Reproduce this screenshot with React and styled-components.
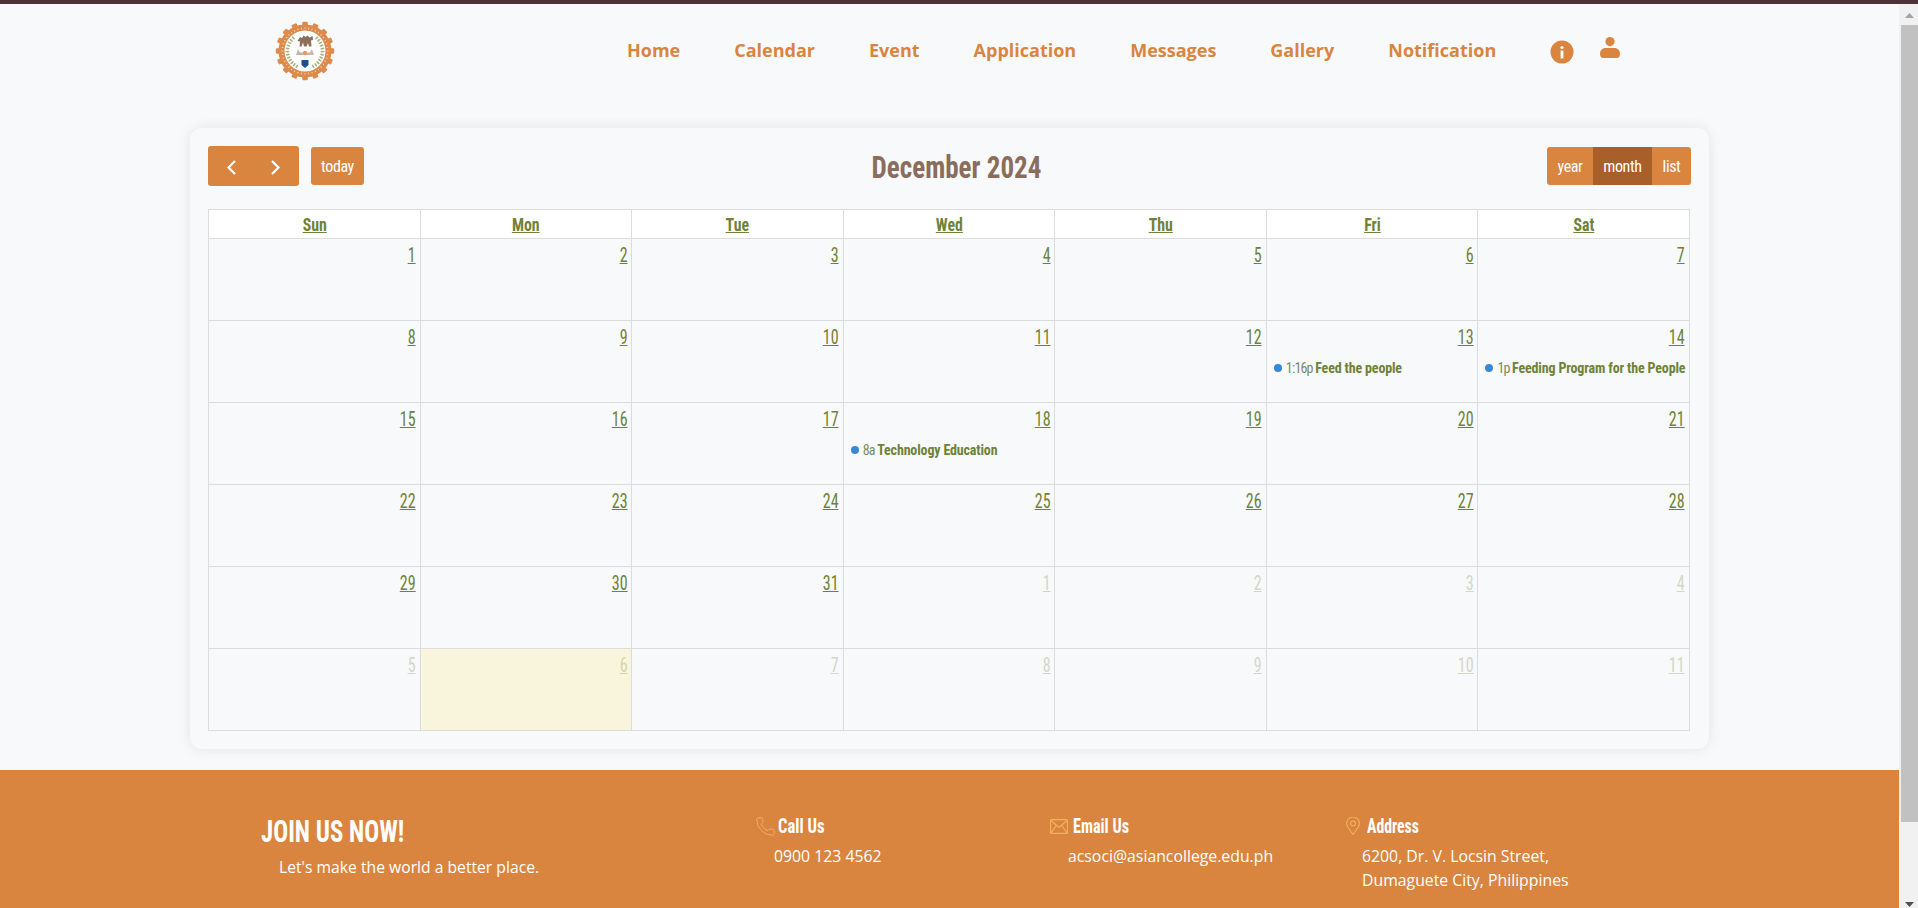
import React from "react";
import styled, { createGlobalStyle } from "styled-components";
import { Phone } from "lucide-react";

const ORANGE = "#d98540";
const OLIVE = "#6f8238";
const ACCENT = "#f4b25e";
const NARROW = `"Liberation Sans Narrow", "Roboto Condensed", "DejaVu Sans Condensed", sans-serif`;

const Global = createGlobalStyle`
  html, body { margin: 0; padding: 0; height: 100%; overflow: hidden; background: #f8f9fb; }
  #root { height: 100%; }
`;

const Shell = styled.div`
  height: 908px;
  display: flex;
  flex-direction: column;
`;
const TopLine = styled.div`
  height: 4px;
  flex: none;
  background: #4f3138;
`;
const Viewport = styled.div`
  flex: 1;
  min-height: 0;
  display: flex;
`;
const Page = styled.main`
  flex: 1;
  min-width: 0;
  overflow: hidden;
  background: #f8f9fb;
`;
const ScrollRail = styled.div`
  width: 19px;
  flex: none;
  display: flex;
  flex-direction: column;
  background: #f1f1f1;
`;
const ScrollCap = styled.div`
  height: 21px;
  flex: none;
  display: flex;
  justify-content: center;
  align-items: ${(p) => (p.$end ? "flex-end" : "flex-start")};
  padding: ${(p) => (p.$end ? "0 0 1px 2px" : "9px 0 0 2px")};
  box-sizing: border-box;
`;
const ScrollThumb = styled.div`
  height: 797px;
  margin-left: 2px;
  background: #c1c1c1;
  flex: none;
`;
const ScrollGap = styled.div`
  flex: 1;
`;
const Squeeze = styled.span`
  display: inline-block;
  transform: scaleX(${(p) => p.$x});
  transform-origin: ${(p) => p.$origin || "center"};
`;
const HeadLabel = styled(Squeeze)`
  text-decoration: underline;
  text-decoration-thickness: 1px;
`;
const Header = styled.header`
  display: flex;
  align-items: center;
  height: 92px;
  padding-left: 275px;
`;
const LogoBox = styled.div`
  width: 60px;
  height: 60px;
  margin: 1px 292px 0 0;
  svg { display: block; }
`;
const Nav = styled.nav`
  display: flex;
  align-items: center;
  gap: 54px;
  font: 700 18px "Open Sans", sans-serif;
  color: ${ORANGE};
`;
const NavLink = styled.a`
  color: inherit;
  text-decoration: none;
`;
const IconLink = styled.a`
  display: block;
  margin-top: ${(p) => p.$top}px;
  margin-left: ${(p) => p.$left}px;
  line-height: 0;
`;
const Card = styled.section`
  width: 1483px;
  margin: 32px auto 0;
  padding: 18px;
  border-radius: 12px;
  background: #f8f9fb;
  box-shadow: 0 0 14px rgba(0, 0, 0, 0.09);
`;
const Toolbar = styled.div`
  display: flex;
  justify-content: space-between;
  align-items: center;
  height: 40px;
  margin-bottom: 23px;
`;
const LeftTools = styled.div`
  display: flex;
  align-items: center;
  gap: 12px;
`;
const ArrowGroup = styled.div`
  width: 91px;
  height: 40px;
  display: flex;
  align-items: center;
  justify-content: space-between;
  padding: 2px 19px 0;
  box-sizing: border-box;
  background: ${ORANGE};
  border-radius: 3px;
`;
const ToolButton = styled.button`
  width: ${(p) => p.$w}px;
  height: 38px;
  padding: 0;
  border: 0;
  color: #fff;
  font: 400 16px ${NARROW};
  letter-spacing: -0.4px;
  background: ${(p) => (p.$active ? "#a95f2a" : ORANGE)};
  border-radius: ${(p) => p.$radius || "3px"};
`;
const Title = styled.h2`
  margin: 2px 0 0 1px;
  font: 700 32px ${NARROW};
  color: #8a6d5a;
`;
const ViewGroup = styled.div`
  display: flex;
`;
const Grid = styled.table`
  width: 1482px;
  table-layout: fixed;
  border-collapse: collapse;
  font-family: ${NARROW};
`;
const HeadCell = styled.th`
  height: 28px;
  padding: 0;
  border: 1px solid #dcdcdc;
  background: #fff;
  color: ${OLIVE};
  font-size: 18px;
  font-weight: 700;
`;
const DayCell = styled.td`
  height: 82px;
  box-sizing: border-box;
  padding: 0 4px;
  vertical-align: top;
  border: 1px solid #dcdcdc;
  background: ${(p) => (p.$today ? "#f9f5dc" : "transparent")};
`;
const DayNumber = styled.a`
  display: block;
  margin-top: 5px;
  text-align: right;
  font-size: 20px;
  line-height: 22px;
  color: ${OLIVE};
  text-decoration: underline;
  text-decoration-thickness: 1px;
  transform: scaleX(0.8);
  transform-origin: right;
  opacity: ${(p) => (p.$muted ? 0.28 : 1)};
`;
const EventRow = styled.div`
  display: flex;
  align-items: center;
  margin: 11px 0 0 3px;
  white-space: nowrap;
  font-size: 14px;
  line-height: 18px;
  color: ${OLIVE};
`;
const Dot = styled.span`
  width: 8px;
  height: 8px;
  margin-right: 4px;
  border-radius: 50%;
  background: #3788d8;
  flex: none;
`;
const EventTime = styled.span`
  margin-right: 2.500px;
  letter-spacing: -0.8px;
  color: #7d8c62;
`;
const EventTitle = styled.b`
  font-weight: 700;
  letter-spacing: -0.15px;
`;
const Footer = styled.footer`
  display: grid;
  grid-template-columns: 495px 294px 296px 1fr;
  height: 208px;
  margin-top: 21px;
  padding: 44px 0 0 261px;
  box-sizing: border-box;
  background: ${ORANGE};
  color: #fff;
`;
const JoinTitle = styled.h3`
  margin: 0;
  font: 700 31px/36px ${NARROW};
`;
const JoinText = styled.p`
  margin: 6px 0 0 18px;
  font: 400 15.7px "Open Sans", sans-serif;
`;
const InfoHead = styled.div`
  display: flex;
  align-items: center;
  gap: ${(p) => p.$gap}px;
  height: 24px;
  font: 700 21px ${NARROW};
`;
const InfoText = styled.p`
  margin: 6px 0 0 ${(p) => p.$indent}px;
  font: 400 15.8px/24px "Open Sans", sans-serif;
`;
const PhoneGlyph = styled(Phone)`
  margin: 0 -1.500px;
  flex: none;
`;

const Logo = () => {
  const teeth = Array.from({ length: 16 }, (_, i) => (i * 360) / 16);
  const marks = Array.from({ length: 40 }, (_, i) => (i * 360) / 40);
  const leaves = Array.from({ length: 12 }, (_, i) => 42 + i * 10);
  return (
    <svg width="60" height="60" viewBox="0 0 60 60">
      {teeth.map((a) => (
        <rect key={a} x="27.2" y="0.8" width="5.600" height="5" rx="1.200" fill="#dd8a4a" transform={`rotate(${a} 30 30)`} />
      ))}
      <circle cx="30" cy="30" r="26.500" fill="#dd8a4a" />
      {marks.map((a) => (
        <rect key={a} x="29.6" y="6.500" width=".8" height="1.600" fill="#f8e3cf" transform={`rotate(${a} 30 30)`} />
      ))}
      <circle cx="30" cy="30" r="20.500" fill="#fff" />
      {leaves.map((a) => (
        <g key={a}>
          <ellipse cx="30" cy="12.500" rx=".9" ry="2.100" fill="#a6b585" transform={`rotate(${a} 30 30)`} />
          <ellipse cx="30" cy="12.500" rx=".9" ry="2.100" fill="#a6b585" transform={`rotate(${-a} 30 30)`} />
        </g>
      ))}
      <path d="M22.500 20l2.500-4 2 1 1.500-2.500 2 1.500 2-1.500 2 2 3-1.500.5 4-2 .5.5 6h-2.500l-1-3.500-1.500 3.500h-2.500l-1-4-1.500 4h-2l.5-5z" fill="#8c705c" />
      <path d="M21 34l2-6 2 3.500h10l2-3.500 2 6z" fill="#c9b5a6" />
      <circle cx="30" cy="32" r="2.200" fill="#e89a5e" />
      <path d="M26.500 39h7v5l-3.500 3-3.500-3z" fill="#1d4f91" />
    </svg>
  );
};

const ScrollArrow = ({ up }) => (
  <svg width="9" height="5" viewBox="0 0 9 5" fill={up ? "#a3a3a3" : "#505050"}>
    <path d={up ? "M4.500 0L9 5H0z" : "M0 0h9L4.500 5z"} />
  </svg>
);
const Chevron = ({ left }) => (
  <svg width="9" height="15" viewBox="0 0 9 15" fill="none" stroke="#fff" strokeWidth="2.200">
    <path d={left ? "M8 1L1.500 7.500 8 14" : "M1 1l6.500 6.500L1 14"} />
  </svg>
);
const InfoIcon = () => (
  <svg width="24" height="24" viewBox="0 0 24 24">
    <circle cx="12" cy="12" r="11.500" fill={ORANGE} />
    <circle cx="12" cy="7.500" r="1.600" fill="#fff" />
    <rect x="10.600" y="10.500" width="2.800" height="8" rx=".5" fill="#fff" />
  </svg>
);
const UserIcon = () => (
  <svg width="20" height="21" viewBox="0 0 20 21" fill={ORANGE}>
    <circle cx="10" cy="4.600" r="4.600" />
    <path d="M6 11h8c3.300 0 6 2 6 5.500 0 2.500-1 4.500-3 4.500H3c-2 0-3-2-3-4.500C0 13 2.700 11 6 11z" />
  </svg>
);
const MailIcon = () => (
  <svg width="18" height="15" viewBox="0 0 18 15" fill="none" stroke={ACCENT} strokeWidth="1.100">
    <rect x=".6" y=".6" width="16.800" height="13.800" rx="1" />
    <path d="M1 1.500l8 7 8-7M1 14l5.500-8M17 14l-5.500-8" />
  </svg>
);
const PinIcon = () => (
  <svg width="14" height="18" viewBox="0 0 14 18" fill="none" stroke={ACCENT} strokeWidth="1.100">
    <path d="M7 17.400C4.500 13.500.6 10 .6 6.400a6.400 6.400 0 0 1 12.800 0C13.400 10 9.500 13.500 7 17.400z" />
    <circle cx="7" cy="6.400" r="2.400" />
  </svg>
);

const days = ["Sun", "Mon", "Tue", "Wed", "Thu", "Fri", "Sat"];
const events = {
  13: ["1:16p", "Feed the people"],
  14: ["1p", "Feeding Program for the People"],
  18: ["8a", "Technology Education"],
};
const cells = [];
for (let i = 1; i <= 31; i++) cells.push({ n: i });
for (let i = 1; i <= 11; i++) cells.push({ n: i, muted: true, today: i === 6 });
const weeks = Array.from({ length: 6 }, (_, w) => cells.slice(w * 7, w * 7 + 7));
const links = ["Home", "Calendar", "Event", "Application", "Messages", "Gallery", "Notification"];

export default function App() {
  return (
    <Shell>
      <Global />
      <TopLine />
      <Viewport>
        <Page>
          <Header>
            <LogoBox><Logo /></LogoBox>
            <Nav>
              {links.map((l) => <NavLink key={l}>{l}</NavLink>)}
            </Nav>
            <IconLink $left={54} $top={4}><InfoIcon /></IconLink>
            <IconLink $left={26} $top={-6}><UserIcon /></IconLink>
          </Header>
          <Card>
            <Toolbar>
              <LeftTools>
                <ArrowGroup><Chevron left /><Chevron /></ArrowGroup>
                <ToolButton $w={53}>today</ToolButton>
              </LeftTools>
              <Title><Squeeze $x={0.845}>December 2024</Squeeze></Title>
              <ViewGroup>
                <ToolButton $w={46} $radius="3px 0 0 3px">year</ToolButton>
                <ToolButton $w={59} $radius="0" $active>month</ToolButton>
                <ToolButton $w={39} $radius="0 3px 3px 0">list</ToolButton>
              </ViewGroup>
            </Toolbar>
            <Grid>
              <thead>
                <tr>{days.map((d) => <HeadCell key={d}><HeadLabel $x={0.88}>{d}</HeadLabel></HeadCell>)}</tr>
              </thead>
              <tbody>
                {weeks.map((w, wi) => (
                  <tr key={wi}>
                    {w.map((c) => (
                      <DayCell key={c.n + (c.muted ? "m" : "")} $today={c.today}>
                        <DayNumber $muted={c.muted}>{c.n}</DayNumber>
                        {!c.muted && events[c.n] && (
                          <EventRow>
                            <Dot />
                            <EventTime>{events[c.n][0]}</EventTime>
                            <EventTitle>{events[c.n][1]}</EventTitle>
                          </EventRow>
                        )}
                      </DayCell>
                    ))}
                  </tr>
                ))}
              </tbody>
            </Grid>
          </Card>
          <Footer>
            <div>
              <JoinTitle><Squeeze $x={0.8} $origin="left">JOIN US NOW!</Squeeze></JoinTitle>
              <JoinText>Let's make the world a better place.</JoinText>
            </div>
            <div>
              <InfoHead $gap={4}><PhoneGlyph size={21} strokeWidth={1} color={ACCENT} /><Squeeze $x={0.79} $origin="left">Call Us</Squeeze></InfoHead>
              <InfoText $indent={18}>0900 123 4562</InfoText>
            </div>
            <div>
              <InfoHead $gap={5}><MailIcon /><Squeeze $x={0.77} $origin="left">Email Us</Squeeze></InfoHead>
              <InfoText $indent={18}>acsoci@asiancollege.edu.ph</InfoText>
            </div>
            <div>
              <InfoHead $gap={7}><PinIcon /><Squeeze $x={0.75} $origin="left">Address</Squeeze></InfoHead>
              <InfoText $indent={16}>6200, Dr. V. Locsin Street,<br />Dumaguete City, Philippines</InfoText>
            </div>
          </Footer>
        </Page>
        <ScrollRail>
          <ScrollCap><ScrollArrow up /></ScrollCap>
          <ScrollThumb />
          <ScrollGap />
          <ScrollCap $end><ScrollArrow /></ScrollCap>
        </ScrollRail>
      </Viewport>
    </Shell>
  );
}
